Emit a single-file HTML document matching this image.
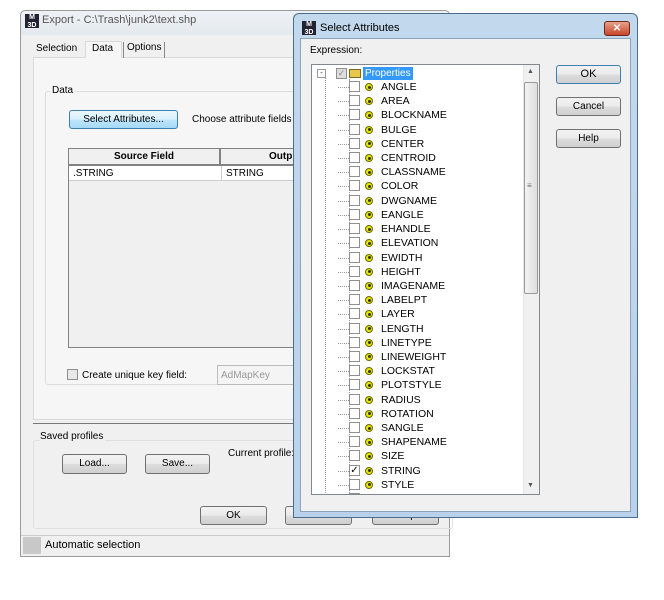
<!DOCTYPE html>
<html><head><style>
*{box-sizing:border-box;margin:0;padding:0}
body{width:664px;height:600px;background:#fff;position:relative;overflow:hidden;font-family:"Liberation Sans",Arial,sans-serif;font-size:10px;color:#000}
.a{position:absolute}
.btn{position:absolute;border:1px solid #707070;border-radius:3px;background:linear-gradient(#f2f2f2,#ebebeb 50%,#dddddd 51%,#cfcfcf);text-align:center;font-size:10px}
.chk{position:absolute;width:11px;height:11px;border:1px solid #8e8f8f;background:#fff}
.ico{position:absolute;width:8px;height:8px;border-radius:50%;background:#e6e600;border:1px solid #6a6a00}
.ico:after{content:"";position:absolute;left:1.5px;top:1.5px;width:3px;height:3px;border-radius:50%;background:#333}
.it{position:absolute;left:0;height:14px;width:220px}
</style></head><body>
<!-- Export window -->
<div class="a" style="left:20px;top:10px;width:430px;height:547px;border:1px solid #9a9a9a;background:#f0f0f0;border-radius:5px 5px 0 0"></div>
<div class="a" style="left:21px;top:11px;width:428px;height:24px;background:linear-gradient(#eef2f6,#e4e9ee);border-radius:5px 5px 0 0"></div>
<div class="a" style="left:25px;top:14px;width:14px;height:14px;background:#223;color:#fff;font-size:7px;font-weight:bold;line-height:8px;text-align:center">M<br>3D</div>
<div class="a" style="left:42px;top:14px;font-size:11px;color:#555">Export - C:\Trash\junk2\text.shp</div>
<div class="a" style="left:33px;top:57px;width:420px;height:363px;border:1px solid #d9d9d9;background:#f6f6f6"></div>
<div class="a" style="left:36px;top:43px;">Selection</div>
<div class="a" style="left:85px;top:41px;width:37px;height:17px;background:#f6f6f6;border:1px solid #d9d9d9;border-bottom:none"></div>
<div class="a" style="left:92px;top:43px">Data</div>
<div class="a" style="left:123px;top:42px;width:42px;height:16px;border-left:1px solid #888;border-right:1px solid #888;padding-left:3px">Options</div>
<div class="a" style="left:45px;top:91px;width:410px;height:294px;border:1px solid #dcdcdc;border-radius:3px"></div>
<div class="a" style="left:50px;top:85px;background:#f6f6f6;padding:0 2px">Data</div>
<div class="btn" style="left:69px;top:110px;width:109px;height:19px;border-color:#3c7fb1;background:linear-gradient(#eaf6fd,#d9f0fc 50%,#bee6fd 51%,#a7d9f5);line-height:17px">Select Attributes...</div>
<div class="a" style="left:192px;top:114px">Choose attribute fields to</div>
<div class="a" style="left:68px;top:148px;width:240px;height:200px;border:1px solid #828282;background:#f0f0f0"></div>
<div class="a" style="left:69px;top:149px;width:152px;height:17px;border:1px solid #828282;border-width:0 2px 2px 0;background:#f0f0f0;text-align:center;font-weight:bold;line-height:16px">Source Field</div>
<div class="a" style="left:221px;top:149px;width:90px;height:17px;border-bottom:2px solid #828282;font-weight:bold;line-height:16px;padding-left:48px">Outp</div>
<div class="a" style="left:69px;top:166px;width:240px;height:15px;background:#fff;border-bottom:1px solid #ccc"></div>
<div class="a" style="left:221px;top:166px;width:1px;height:15px;background:#ccc"></div>
<div class="a" style="left:73px;top:168px">.STRING</div>
<div class="a" style="left:226px;top:168px">STRING</div>
<div class="chk" style="left:67px;top:369px;background:#e8e8e8"></div>
<div class="a" style="left:82px;top:370px">Create unique key field:</div>
<div class="a" style="left:217px;top:365px;width:90px;height:20px;border:1px solid #bbb;background:#f4f4f4;color:#999;padding:4px 3px">AdMapKey</div>
<div class="a" style="left:33px;top:423px;width:420px;height:1px;background:#777"></div>
<div class="a" style="left:33px;top:440px;width:420px;height:89px;border:1px solid #e0e0e0;border-radius:3px"></div>
<div class="a" style="left:40px;top:431px;background:#f0f0f0;padding-right:2px">Saved profiles</div>
<div class="btn" style="left:62px;top:454px;width:65px;height:20px;line-height:18px">Load...</div>
<div class="btn" style="left:145px;top:454px;width:65px;height:20px;line-height:18px">Save...</div>
<div class="a" style="left:228px;top:448px">Current profile:</div>
<div class="btn" style="left:200px;top:506px;width:67px;height:19px;line-height:17px">OK</div>
<div class="btn" style="left:285px;top:506px;width:67px;height:19px;line-height:17px">Cancel</div>
<div class="btn" style="left:372px;top:506px;width:67px;height:19px;line-height:17px">Help</div>
<div class="a" style="left:21px;top:535px;width:428px;height:1px;background:#ccc"></div>
<div class="a" style="left:23px;top:537px;width:18px;height:17px;background:#c8c8c8"></div>
<div class="a" style="left:45px;top:539px;font-size:11px">Automatic selection</div>

<!-- Select Attributes window -->
<div class="a" style="left:293px;top:13px;width:345px;height:505px;border:1px solid #4a6d8c;background:linear-gradient(#c2d8ec,#b9d1ea);border-radius:6px 6px 0 0"></div>
<div class="a" style="left:300px;top:38px;width:331px;height:474px;background:#f0f0f0;border:1px solid #8ba4bd"></div>
<div class="a" style="left:302px;top:21px;width:14px;height:14px;background:#223;color:#fff;font-size:7px;font-weight:bold;line-height:8px;text-align:center">M<br>3D</div>
<div class="a" style="left:320px;top:22px;font-size:11px">Select Attributes</div>
<div class="a" style="left:604px;top:21px;width:26px;height:15px;border-radius:3px;background:linear-gradient(#e8a08a,#c7452a);border:1px solid #6b2a1c;color:#fff;font-weight:bold;text-align:center;line-height:13px;font-size:10px">✕</div>
<div class="a" style="left:310px;top:45px">Expression:</div>
<div class="a" style="left:311px;top:64px;width:229px;height:431px;border:1px solid #828790;background:#fff;overflow:hidden">
 <div class="a" style="left:13px;top:8px;width:0;height:430px;border-left:1px dotted #999"></div>
 <div class="a" style="left:5px;top:4px;width:9px;height:9px;border:1px solid #999;background:#fff;font-size:8px;line-height:6px;text-align:center;color:#333">-</div>
 <div class="chk" style="left:24px;top:3px;background:#ddd;color:#888;font-size:9px;line-height:9px;text-align:center">✓</div>
 <div class="a" style="left:37px;top:4px;width:12px;height:9px;background:#e8c84a;border:1px solid #7a6a20"></div>
 <div class="a" style="left:51px;top:2px;background:#3399ff;color:#fff;padding:0 2px;height:13px;line-height:13px">Properties</div>
 <div class="a" style="left:37px;top:14px;width:0;height:420px;border-left:1px dotted #999"></div>
</div>
<div id="list" class="a" style="left:311px;top:80px;width:212px;height:414px;overflow:hidden"></div>
<div class="a" style="left:523px;top:65px;width:16px;height:429px;background:#f0f0f0;border-left:1px solid #e6e6e6"></div>
<div class="a" style="left:527px;top:68px;font-size:7px;color:#555">▲</div>
<div class="a" style="left:524px;top:82px;width:14px;height:212px;border:1px solid #999;border-radius:2px;background:linear-gradient(90deg,#f3f3f3,#dedede)"></div>
<div class="a" style="left:527px;top:181px;font-size:8px;color:#666">≡</div>
<div class="a" style="left:527px;top:482px;font-size:7px;color:#555">▼</div>
<div class="btn" style="left:556px;top:65px;width:65px;height:19px;line-height:17px;border-color:#3c7fb1;font-size:11px">OK</div>
<div class="btn" style="left:556px;top:97px;width:65px;height:19px;line-height:17px">Cancel</div>
<div class="btn" style="left:556px;top:129px;width:65px;height:19px;line-height:17px">Help</div>
<script>
var n=["ANGLE","AREA","BLOCKNAME","BULGE","CENTER","CENTROID","CLASSNAME","COLOR","DWGNAME","EANGLE","EHANDLE","ELEVATION","EWIDTH","HEIGHT","IMAGENAME","LABELPT","LAYER","LENGTH","LINETYPE","LINEWEIGHT","LOCKSTAT","PLOTSTYLE","RADIUS","ROTATION","SANGLE","SHAPENAME","SIZE","STRING","STYLE",""];
var h="";n.forEach(function(s,i){var y=i*14.21;h+='<div class="it" style="top:'+y+'px"><div class="a" style="left:27px;top:7px;width:11px;border-top:1px dotted #999"></div><div class="chk" style="left:38px;top:1px;font-size:10px;line-height:9px;text-align:center">'+(s=="STRING"?"✓":"")+'</div>'+(s?'<div class="ico" style="left:54px;top:3px"></div><div class="a" style="left:70px;top:1px;font-size:10.5px">'+s+'</div>':'')+'</div>';});
document.getElementById("list").innerHTML=h;
</script>
</body></html>
